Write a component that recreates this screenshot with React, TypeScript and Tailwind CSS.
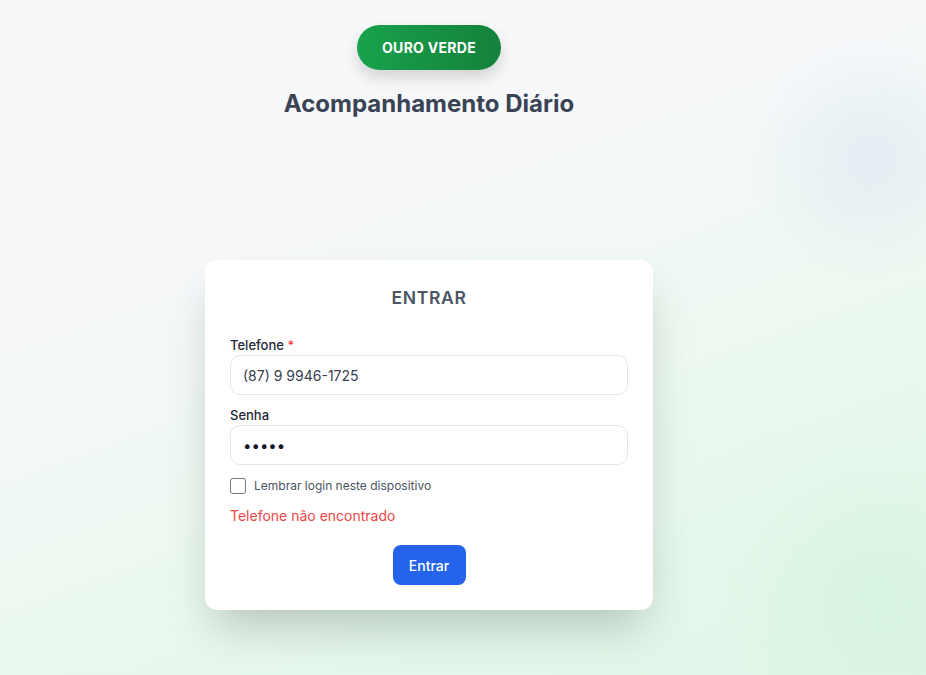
import { useState } from 'react';

function Header() {
  return (
    <div className="flex flex-col items-center pt-[25px]">
      <div className="flex h-[45px] w-[144px] items-center justify-center rounded-full bg-gradient-to-r from-[#18a24b] to-[#15813c] text-[14px] font-bold tracking-[0.02em] text-white shadow-[0_8px_16px_rgba(0,0,0,0.15)]">
        OURO VERDE
      </div>
      <h1 className="mt-[18px] text-[24px] font-bold leading-8 text-[#3a4354]">
        Acompanhamento Diário
      </h1>
    </div>
  );
}

type tFieldProps = {
  label: string;
  required?: boolean;
  children: React.ReactNode;
};

function Field({ label, required, children }: tFieldProps) {
  return (
    <div className="flex flex-col">
      <label className="text-[13px] font-medium leading-5 text-[#1f2937]">
        {label}
        {required && <span className="text-[#ef4444]"> *</span>}
      </label>
      {children}
    </div>
  );
}

function LoginCard() {
  const [phone, setPhone] = useState('(87) 9 9946-1725');
  const [pass, setPass] = useState('12345');
  const [remember, setRemember] = useState(false);

  return (
    <div className="w-[448px] rounded-xl bg-white px-[25px] pt-6 pb-[25px] shadow-[0_25px_45px_-10px_rgba(60,80,70,0.3)]">
      <h2 className="text-center text-[17.5px] font-semibold leading-7 tracking-[0.04em] text-[#4b5563]">
        ENTRAR
      </h2>
      <div className="mt-[23px] flex flex-col gap-[10px]">
        <Field label="Telefone" required>
          <input
            value={phone}
            onChange={(e) => setPhone(e.target.value)}
            className="h-10 w-full rounded-[10px] border border-[#e3e7ef] px-3 text-[14px] text-[#374151] outline-none"
          />
        </Field>
        <Field label="Senha">
          <input
            type="password"
            value={pass}
            onChange={(e) => setPass(e.target.value)}
            className="h-10 w-full rounded-[10px] border border-[#e3e7ef] px-3 text-[15px] text-[#111827] outline-none"
          />
        </Field>
      </div>
      <label className="mt-3 flex items-center gap-2">
        <input
          type="checkbox"
          checked={remember}
          onChange={(e) => setRemember(e.target.checked)}
          className="h-4 w-4 appearance-none rounded-[3px] border border-[#767676] bg-white"
        />
        <span className="text-[12px] text-[#4b5563]">
          Lembrar login neste dispositivo
        </span>
      </label>
      <p className="mt-[11px] text-[14px] leading-5 text-[#ef4444]">
        Telefone não encontrado
      </p>
      <div className="mt-[19px] flex justify-center">
        <button
          type="submit"
          className="h-10 w-[73px] rounded-lg bg-[#2563eb] text-[14px] font-medium text-white"
        >
          Entrar
        </button>
      </div>
    </div>
  );
}

export default function App() {
  return (
    <div
      className="min-h-[675px] w-full bg-[radial-gradient(circle_at_870px_160px,rgba(226,236,242,0.9)_0,rgba(226,236,242,0)_120px),radial-gradient(circle_at_880px_600px,rgba(214,244,224,0.9)_0,rgba(214,244,224,0)_160px),linear-gradient(160deg,#f7f8fa_0%,#f6f8fa_35%,#eaf8ee_65%,#dff6e7_100%)] font-['Inter',sans-serif]"
    >
      <div className="flex w-[858px] flex-col items-center">
        <Header />
        <div className="mt-[140px]">
          <LoginCard />
        </div>
      </div>
    </div>
  );
}
